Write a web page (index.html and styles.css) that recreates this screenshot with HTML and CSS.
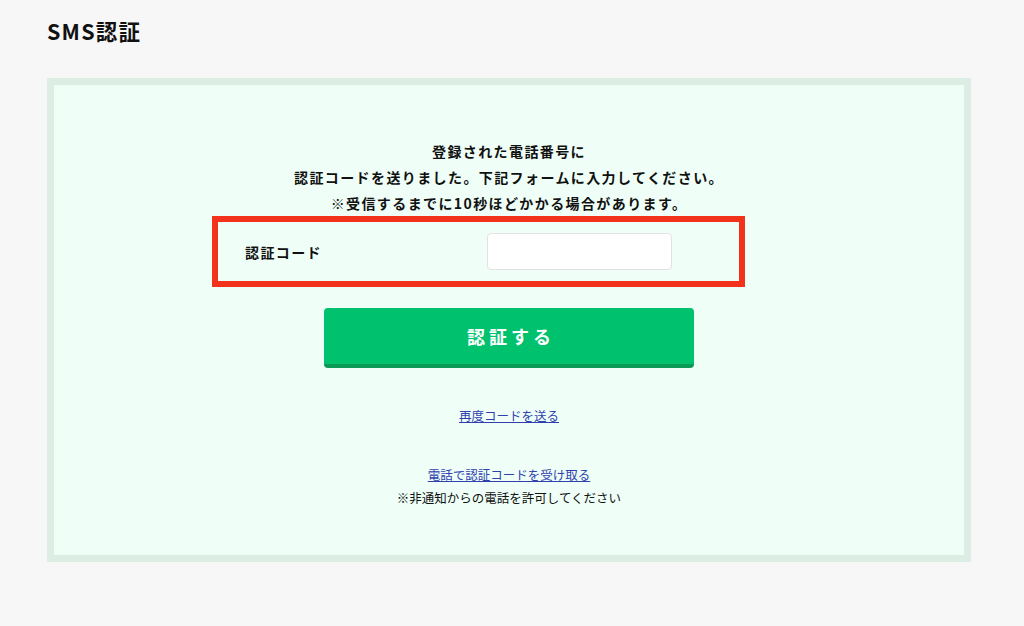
FILE: index.html
```html
<!DOCTYPE html>
<html lang="ja">
<head>
  <meta charset="UTF-8">
  <meta name="viewport" content="width=device-width, initial-scale=1.0">
  <title>SMS認証</title>
  <link rel="stylesheet" href="styles.css">
</head>
<body>
  <div class="page">
    <h1 class="page-title">SMS認証</h1>

    <div class="auth-box">
      <p class="message">
        登録された電話番号に<br>
        認証コードを送りました。下記フォームに入力してください。<br>
        ※受信するまでに10秒ほどかかる場合があります。
      </p>

      <div class="code-row">
        <label class="code-label" for="code">認証コード</label>
        <input class="code-input" id="code" type="text">
      </div>

      <button class="submit-btn" type="button">認証する</button>

      <p class="resend"><a href="#">再度コードを送る</a></p>

      <div class="phone">
        <a href="#">電話で認証コードを受け取る</a>
        <p>※非通知からの電話を許可してください</p>
      </div>
    </div>
  </div>
</body>
</html>
```

FILE: styles.css
```css
body {
  margin: 0;
  background-color: #f7f7f7;
  color: #111;
  font-family: "Noto Sans CJK JP", "Noto Sans", sans-serif;
}

.page {
  padding: 20px 53px 0 47px;
}

.page-title {
  margin: 0;
  font-size: 21.5px;
  line-height: 22px;
  font-weight: 700;
  letter-spacing: 1.2px;
}

/** Auth box **/

.auth-box {
  margin-top: 36px;
  border: 7px solid #dcede4;
  background-color: #effff7;
  padding: 53px 0 46px;
  text-align: center;
}

.message {
  margin: 0;
  font-size: 14px;
  line-height: 26px;
  font-weight: 700;
  letter-spacing: 1.4px;
}

.code-row {
  display: flex;
  align-items: center;
  width: 533px;
  box-sizing: border-box;
  margin: 0 0 0 158px;
  padding: 11px 27px;
  border: 6px solid #f2321b;
  text-align: left;
}

.code-label {
  width: 242px;
  font-size: 14px;
  font-weight: 700;
  letter-spacing: 1.4px;
}

.code-input {
  width: 185px;
  height: 37px;
  box-sizing: border-box;
  border: 1px solid #e2e2e2;
  border-radius: 4px;
  background: #fff;
}

.submit-btn {
  display: block;
  width: 370px;
  height: 60px;
  margin: 21px auto 0;
  border: 0;
  border-bottom: 4px solid #0b9a56;
  border-radius: 4px;
  background-color: #00c16e;
  color: #fff;
  font-family: inherit;
  font-size: 18px;
  font-weight: 700;
  letter-spacing: 4px;
  padding: 0 0 0 4px;
}

.resend,
.phone {
  font-size: 12.5px;
  line-height: 23px;
}

.resend {
  margin: 36px 0 0;
}

.phone {
  margin-top: 36px;
}

.phone p {
  margin: 0;
}

a {
  color: #2f3fae;
}
```
